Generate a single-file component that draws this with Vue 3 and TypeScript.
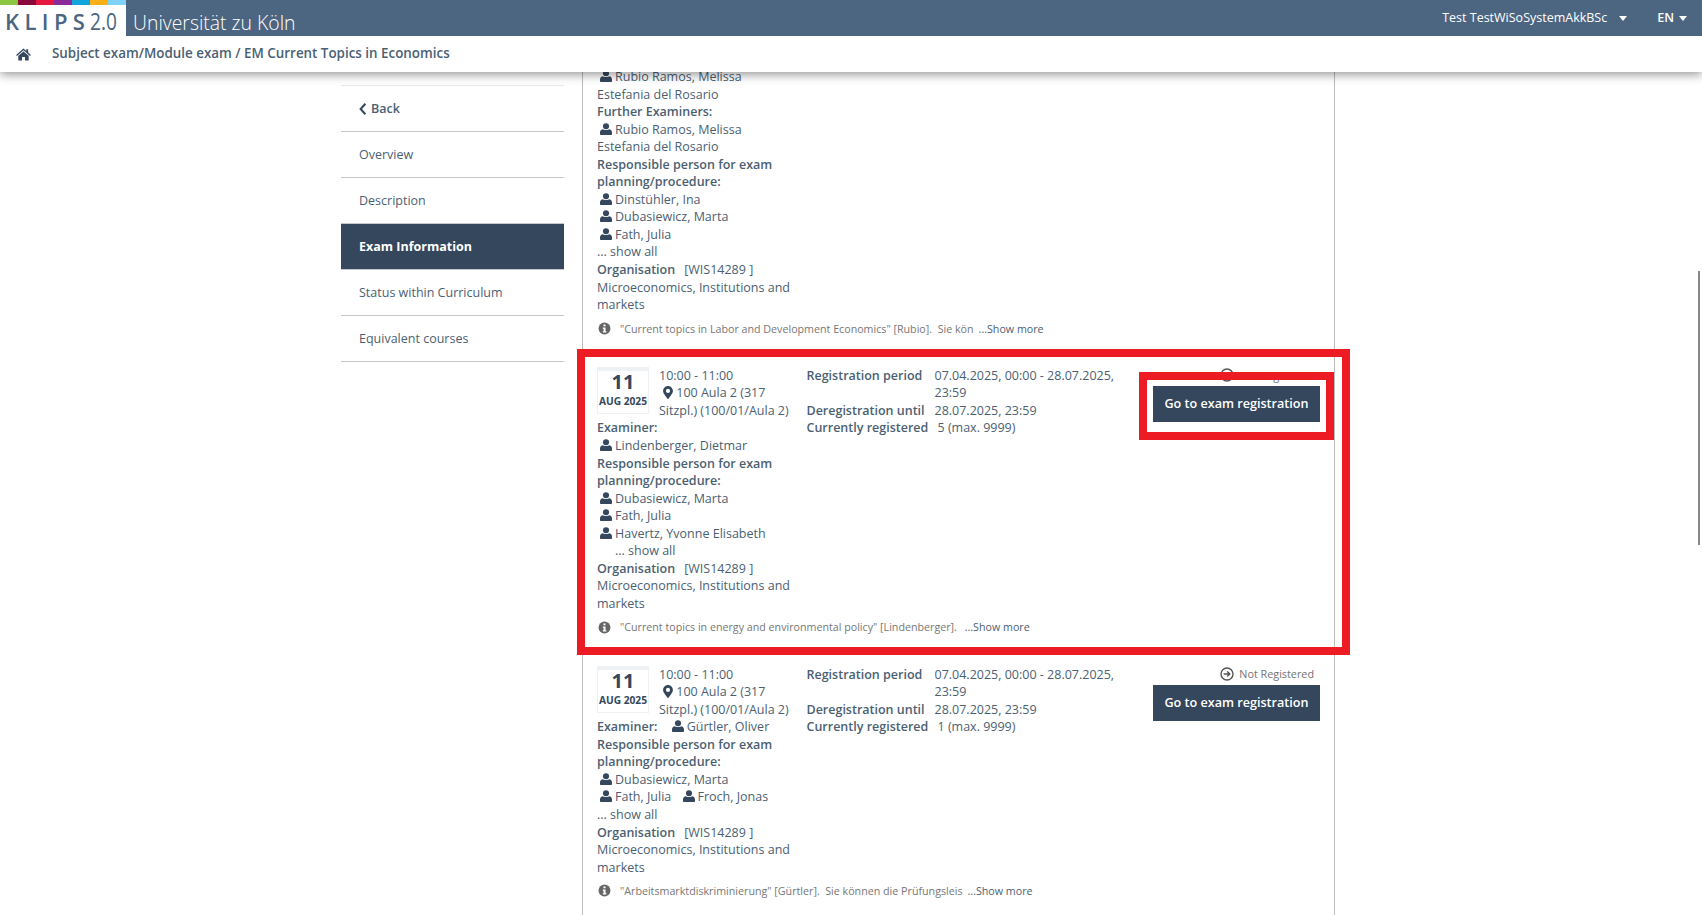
<script setup lang="ts">
interface PersonGroup {
  label?: string
  inlineLabel?: boolean
  persons: string[]
  showAll?: boolean
  indentShowAll?: boolean
}

interface ExamDate {
  time: string
  room: string
  period: string
  until: string
  registered: string
  highlighted?: boolean
}

interface Exam {
  date?: ExamDate
  groups: PersonGroup[]
  note: string
}

const strip = ['#8cc63f', '#8b0a3c', '#e5173f', '#8a2a9a', '#0fa5dc', '#fbb017', '#7fd3f7']
const menu = ['Overview', 'Description', 'Exam Information', 'Status within Curriculum', 'Equivalent courses']

const exams: Exam[] = [
  {
    groups: [
      { persons: ['Rubio Ramos, Melissa Estefania del Rosario'] },
      { label: 'Further Examiners:', persons: ['Rubio Ramos, Melissa Estefania del Rosario'] },
      {
        label: 'Responsible person for exam planning/procedure:',
        persons: ['Dinstühler, Ina', 'Dubasiewicz, Marta', 'Fath, Julia'],
        showAll: true,
      },
    ],
    note: '"Current topics in Labor and Development Economics" [Rubio].  Sie kön',
  },
  {
    date: {
      time: '10:00 - 11:00',
      room: '100 Aula 2 (317 Sitzpl.) (100/01/Aula 2)',
      period: '07.04.2025, 00:00 - 28.07.2025, 23:59',
      until: '28.07.2025, 23:59',
      registered: '5 (max. 9999)',
      highlighted: true,
    },
    groups: [
      { label: 'Examiner:', persons: ['Lindenberger, Dietmar'] },
      {
        label: 'Responsible person for exam planning/procedure:',
        persons: ['Dubasiewicz, Marta', 'Fath, Julia', 'Havertz, Yvonne Elisabeth'],
        showAll: true,
        indentShowAll: true,
      },
    ],
    note: '"Current topics in energy and environmental policy" [Lindenberger]. ',
  },
  {
    date: {
      time: '10:00 - 11:00',
      room: '100 Aula 2 (317 Sitzpl.) (100/01/Aula 2)',
      period: '07.04.2025, 00:00 - 28.07.2025, 23:59',
      until: '28.07.2025, 23:59',
      registered: '1 (max. 9999)',
    },
    groups: [
      { label: 'Examiner:', inlineLabel: true, persons: ['Gürtler, Oliver'] },
      {
        label: 'Responsible person for exam planning/procedure:',
        persons: ['Dubasiewicz, Marta', 'Fath, Julia', 'Froch, Jonas'],
        showAll: true,
      },
    ],
    note: '"Arbeitsmarktdiskriminierung" [Gürtler].  Sie können die Prüfungsleis',
  },
]
</script>

<template>
  <div class="page">
    <header class="topbar">
      <div class="brand-row">
        <div class="logo">
          <div class="strip">
            <span v-for="c in strip" :key="c" :style="{ background: c }"></span>
          </div>
          <div class="logo-text"><span class="klips">KLIPS</span><span class="version">2.0</span></div>
        </div>
        <div class="uni">Universität zu Köln</div>
        <div class="user-nav">
          <span>Test TestWiSoSystemAkkBSc</span>
          <i class="caret"></i>
          <strong class="lang">EN</strong>
          <i class="caret caret-lang"></i>
        </div>
      </div>
      <div class="crumb">
        <svg class="home" viewBox="0 0 16 14" aria-hidden="true">
          <path d="M8 0.6 L11 3.2 V1.4 H13 V4.9 L16 7.5 L15.1 8.5 L8 2.5 L0.9 8.5 L0 7.5 Z" />
          <path d="M8 3.7 L13.6 8.4 V13.4 H9.6 V9.6 H6.4 V13.4 H2.4 V8.4 Z" />
        </svg>
        <span>Subject exam/Module exam / EM Current Topics in Economics</span>
      </div>
    </header>

    <div class="body-row">
      <nav class="side">
        <a class="side-item back">
          <svg class="chev" viewBox="0 0 8 12" aria-hidden="true">
            <path d="M6.4 0.8 L1.6 6 L6.4 11.2" />
          </svg>
          Back
        </a>
        <a v-for="m in menu" :key="m" class="side-item" :class="{ active: m === 'Exam Information' }">{{ m }}</a>
      </nav>

      <main class="list">
        <section v-for="(exam, i) in exams" :key="i" class="exam">
          <div class="exam-grid">
            <div class="col-left">
              <div v-if="exam.date" class="when">
                <div class="datebox">
                  <div class="day">11</div>
                  <div class="month">AUG 2025</div>
                </div>
                <div class="time">
                  <div>{{ exam.date.time }}</div>
                  <svg class="pin" viewBox="0 0 384 512" aria-hidden="true">
                    <path d="M172.268 501.67C26.97 291.031 0 269.413 0 192 0 85.961 85.961 0 192 0s192 85.961 192 192c0 77.413-26.97 99.031-172.268 309.67-9.535 13.774-29.93 13.773-39.464 0zM192 272c44.183 0 80-35.817 80-80s-35.817-80-80-80-80 35.817-80 80 35.817 80 80 80z" />
                  </svg>
                  {{ exam.date.room }}
                </div>
              </div>

              <div v-for="g in exam.groups" :key="g.label" class="group">
                <b v-if="g.label" :class="g.inlineLabel ? 'label-inline' : 'label-block'">{{ g.label }}</b>
                <template v-for="p in g.persons" :key="p">
                  {{ ' ' }}<span class="person"><svg class="user" viewBox="0 0 22 22" aria-hidden="true"><circle cx="11" cy="6" r="5.6" /><path d="M4.5 11.5 C7 13.4 15 13.4 17.5 11.5 C20.5 12.4 22 14.6 22 17.5 V20 C22 21.2 21.2 22 20 22 H2 C0.8 22 0 21.2 0 20 V17.5 C0 14.6 1.5 12.4 4.5 11.5 Z" /></svg>{{ p }}</span>
                </template>
                <div v-if="g.showAll" :class="{ indent: g.indentShowAll }">... show all</div>
              </div>

              <div class="org"><b>Organisation</b><span class="org-code">[WIS14289 ]</span></div>
              <div>Microeconomics, Institutions and markets</div>
            </div>

            <dl v-if="exam.date" class="col-mid">
              <dt>Registration period</dt>
              <dd>{{ exam.date.period }}</dd>
              <dt>Deregistration until</dt>
              <dd>{{ exam.date.until }}</dd>
              <dt>Currently registered</dt>
              <dd class="count">{{ exam.date.registered }}</dd>
            </dl>

            <div v-if="exam.date" class="col-right">
              <div class="status">
                <svg class="arrow" viewBox="0 0 14 14" aria-hidden="true">
                  <circle cx="7" cy="7" r="6" />
                  <path d="M3.6 7 H9.6 M7.2 4.4 L9.8 7 L7.2 9.6" />
                </svg>
                Not Registered
              </div>
              <button class="go" type="button">
                Go to exam registration
                <span v-if="exam.date.highlighted" class="mark mark-button"></span>
              </button>
            </div>
          </div>

          <div class="note">
            <svg class="info" viewBox="0 0 14 14" aria-hidden="true">
              <circle cx="7" cy="7" r="6.4" />
              <rect x="5.9" y="2.6" width="2.2" height="2" fill="#fff" />
              <path d="M5.2 6 H8.1 V10 H9 V11.3 H5.2 V10 H6 V7.3 H5.2 Z" fill="#fff" />
            </svg>
            <span>{{ exam.note }}</span>
            <span class="more">...Show more</span>
          </div>

          <span v-if="exam.date?.highlighted" class="mark mark-row"></span>
        </section>
      </main>
    </div>

    <div class="scrollbar"></div>
  </div>
</template>

<style scoped>
* {
  box-sizing: border-box;
}

.page {
  position: relative;
  height: 915px;
  overflow: hidden;
  background: #fff;
  color: #4b5f73;
  font-family: 'Open Sans', 'Liberation Sans', sans-serif;
  font-size: 12.5px;
  line-height: 17.55px;
}

.topbar {
  position: relative;
  z-index: 5;
  background: #fff;
  box-shadow: 0 2px 10px rgba(0, 0, 0, 0.45);
}

.brand-row {
  display: flex;
  align-items: stretch;
  height: 36px;
  background: #4c6580;
  color: #fff;
}

.logo {
  flex: none;
  width: 126px;
  overflow: hidden;
  background: #fff;
}

.strip {
  display: flex;
  height: 5px;
}

.strip span {
  flex: 1;
}

.logo-text {
  display: flex;
  align-items: baseline;
  padding-left: 5px;
  color: #4c6580;
  font-size: 22px;
  line-height: 32px;
}

.klips {
  font-weight: 600;
  letter-spacing: 5.4px;
}

.version {
  display: inline-block;
  font-weight: 400;
  font-size: 23px;
  transform: scaleX(0.83);
  transform-origin: left;
}

.uni {
  margin-left: 7px;
  padding-top: 9px;
  font-size: 19.4px;
  font-weight: 300;
  line-height: 28px;
}

.user-nav {
  display: flex;
  align-items: center;
  margin-left: auto;
  padding-right: 15px;
}

.lang {
  margin-left: 30px;
  font-weight: 600;
}

.caret {
  width: 0;
  height: 0;
  margin-left: 12px;
  border-left: 4.5px solid transparent;
  border-right: 4.5px solid transparent;
  border-top: 5px solid #fff;
}

.caret-lang {
  margin-left: 5px;
}

.crumb {
  display: flex;
  align-items: center;
  height: 36px;
  padding-left: 16px;
  font-size: 13.4px;
  font-weight: 600;
}

.home {
  width: 15px;
  height: 13px;
  margin-right: 21px;
  fill: #34475d;
}

.body-row {
  display: flex;
  align-items: flex-start;
  padding-left: 341px;
}

.side {
  width: 223px;
  margin-top: 13px;
  border-top: 1px solid #e8e8e8;
}

.side-item {
  display: flex;
  align-items: center;
  height: 46px;
  padding-left: 18px;
  border-bottom: 1px solid #c4c8cc;
}

.back {
  font-weight: 600;
}

.chev {
  width: 8px;
  height: 12px;
  margin-right: 4px;
  fill: none;
  stroke: #34475d;
  stroke-width: 2;
}

.active {
  background: #34475d;
  color: #fff;
  font-weight: 700;
}

.list {
  width: 753px;
  margin-top: -4px;
  margin-left: 18px;
  border-left: 1px solid #bcbcbc;
  border-right: 1px solid #bcbcbc;
}

.exam {
  position: relative;
  padding: 0 14px 28.6px 14px;
}

.exam-grid {
  display: flex;
  align-items: flex-start;
}

.col-left {
  flex: none;
  width: 200px;
}

b,
dt {
  font-weight: 600;
  white-space: nowrap;
}

.label-block {
  display: block;
  white-space: normal;
}

.label-inline {
  margin-right: 8px;
}

.person {
  display: inline-block;
  margin-right: 5px;
}

.when {
  display: flex;
  gap: 10px;
}

.datebox {
  flex: none;
  width: 52px;
  height: 47px;
  border: 1px solid #eef1f4;
  border-top: 4px solid #eef1f4;
  color: #34475d;
  text-align: center;
}

.day {
  margin-top: -1px;
  font-size: 20px;
  font-weight: 700;
  line-height: 24px;
}

.month {
  font-size: 10.2px;
  font-weight: 700;
  line-height: 14px;
  white-space: nowrap;
}

.pin {
  width: 10px;
  height: 13px;
  margin: 0 0 -2px 4px;
  fill: #34475d;
}

.user {
  width: 12px;
  height: 12px;
  margin: 0 3px -1px 3px;
  fill: #34475d;
}

.indent {
  padding-left: 18px;
}

.org-code {
  margin-left: 9px;
}

.col-mid {
  display: grid;
  flex: none;
  grid-template-columns: 128px 190px;
  margin: 0 0 0 9.5px;
}

dd {
  margin: 0;
}

.count {
  padding-left: 3px;
}

.col-right {
  display: flex;
  flex: 1;
  flex-direction: column;
  align-items: flex-end;
}

.status {
  display: flex;
  align-items: center;
  height: 17px;
  margin-bottom: 2px;
  padding-right: 6px;
  color: #737373;
  font-size: 10.8px;
}

.arrow {
  width: 14px;
  height: 14px;
  margin-right: 5px;
  fill: none;
  stroke: #555;
  stroke-width: 1.4;
}

.go {
  position: relative;
  flex: none;
  width: 167px;
  height: 36px;
  border: none;
  background: #34475d;
  color: #fff;
  font: 600 12.6px 'Open Sans', 'Liberation Sans', sans-serif;
}

.note {
  display: flex;
  align-items: center;
  margin-top: 7px;
  color: #777;
  font-size: 10.7px;
  white-space: pre;
}

.info {
  width: 13px;
  height: 13px;
  margin: -2px 9px 0 1px;
  fill: #666;
}

.more {
  margin-left: 5px;
  color: #4b5f73;
}

.mark {
  position: absolute;
  z-index: 2;
  border: 8px solid #ed1c24;
  pointer-events: none;
}

.mark-row {
  top: -18px;
  right: -16px;
  bottom: 11px;
  left: -6px;
}

.mark-button {
  top: -14px;
  right: -14px;
  bottom: -18px;
  left: -14px;
}

.scrollbar {
  position: absolute;
  top: 271px;
  right: 2px;
  width: 2px;
  height: 274px;
  background: #888;
}
</style>
